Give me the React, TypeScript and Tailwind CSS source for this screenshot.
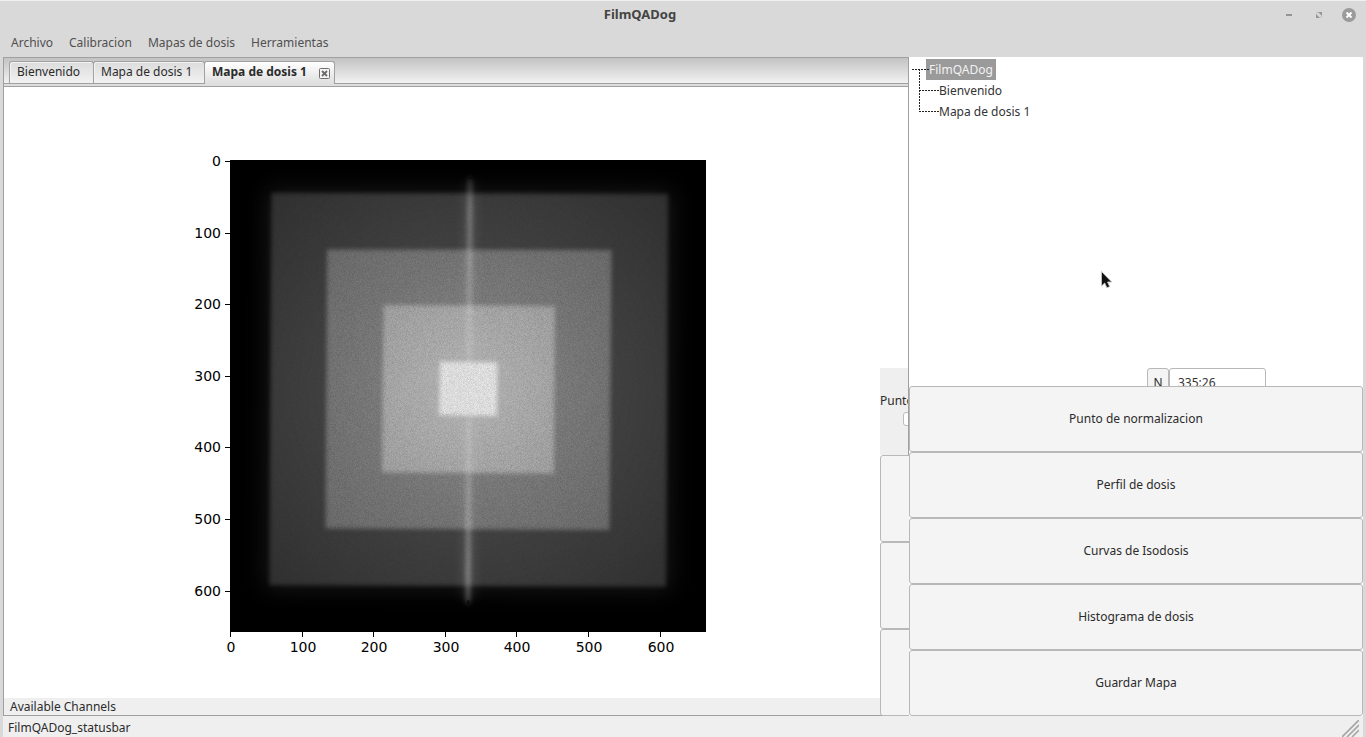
import React from "react";

const MENUS = ["Archivo", "Calibracion", "Mapas de dosis", "Herramientas"];
const ACTIONS = [
  "Punto de normalizacion",
  "Perfil de dosis",
  "Curvas de Isodosis",
  "Histograma de dosis",
  "Guardar Mapa",
];
const TICKS = [0, 100, 200, 300, 400, 500, 600];

function TitleBar() {
  return (
    <header className="flex h-[30px] shrink-0 items-center border-t border-[#f0f0f0] pr-2.5 pb-0.5">
      <h1 className="flex-1 pr-0.5 text-center text-[13px] font-bold text-[#444]">FilmQADog</h1>
      <div className="flex items-center justify-end gap-4">
        <button aria-label="Minimizar" className="flex size-3.5 items-center justify-center">
          <svg width="14" height="14" viewBox="0 0 14 14">
            <rect x="4" y="6" width="6" height="2" fill="#949494" />
          </svg>
        </button>
        <button aria-label="Restaurar" className="flex size-3.5 items-center justify-center">
          <svg width="14" height="14" viewBox="0 0 14 14">
            <path d="M6 4h4v4zM4 6v4h4z" fill="#949494" />
            <path d="M4.5 5.5 6 4M8.5 9.5 10 8" stroke="#b5b5b5" />
          </svg>
        </button>
        <button aria-label="Cerrar" className="flex size-3.5 items-center justify-center">
          <svg width="14" height="14" viewBox="0 0 14 14">
            <circle cx="7" cy="7" r="7" fill="#9a9a9a" />
            <path d="M4.5 4.5l5 5M9.5 4.5l-5 5" stroke="#fff" strokeWidth="2" />
          </svg>
        </button>
      </div>
    </header>
  );
}

function DoseMap() {
  return (
    <svg
      viewBox="4 87 904 611"
      className="block h-full w-full"
      role="img"
      aria-label="Mapa de dosis"
    >
      <defs>
        <clipPath id="axes">
          <rect x="230" y="160" width="476" height="472" />
        </clipPath>
        <filter id="soft" x="-20%" y="-20%" width="140%" height="140%" colorInterpolationFilters="sRGB">
          <feGaussianBlur stdDeviation="1.9" />
        </filter>
        <filter id="halo" x="-30%" y="-30%" width="160%" height="160%" colorInterpolationFilters="sRGB">
          <feGaussianBlur stdDeviation="11" />
        </filter>
        <filter
          id="beam"
          filterUnits="userSpaceOnUse"
          x="440"
          y="150"
          width="60"
          height="480"
          colorInterpolationFilters="sRGB"
        >
          <feGaussianBlur stdDeviation="2 3" />
        </filter>
        <filter
          id="glow"
          filterUnits="userSpaceOnUse"
          x="420"
          y="150"
          width="100"
          height="480"
          colorInterpolationFilters="sRGB"
        >
          <feGaussianBlur stdDeviation="5 5" />
        </filter>
        <filter id="grain" x="0" y="0" width="100%" height="100%" colorInterpolationFilters="sRGB">
          <feTurbulence type="fractalNoise" baseFrequency="1.37" numOctaves="1" seed="4" />
          <feColorMatrix values="1.6 0 0 0 -0.3  1.6 0 0 0 -0.3  1.6 0 0 0 -0.3  0 0 0 0 1" />
        </filter>
        <radialGradient id="g1" gradientUnits="userSpaceOnUse" cx="469" cy="390" r="280">
          <stop offset="0.5" stopColor="#404040" />
          <stop offset="1" stopColor="#2f2f2f" />
        </radialGradient>
        <radialGradient id="g2" gradientUnits="userSpaceOnUse" cx="469" cy="390" r="200">
          <stop offset="0.4" stopColor="#7a7a7a" />
          <stop offset="1" stopColor="#686868" />
        </radialGradient>
        <radialGradient id="g3" gradientUnits="userSpaceOnUse" cx="469" cy="390" r="120">
          <stop offset="0.2" stopColor="#aeaeae" />
          <stop offset="1" stopColor="#9c9c9c" />
        </radialGradient>
        <linearGradient id="gb" gradientUnits="userSpaceOnUse" x1="0" y1="174" x2="0" y2="604">
          <stop offset="0" stopColor="#fff" stopOpacity="0.1" />
          <stop offset="0.08" stopColor="#fff" stopOpacity="0.26" />
          <stop offset="0.3" stopColor="#fff" stopOpacity="0.18" />
          <stop offset="0.45" stopColor="#fff" stopOpacity="0.12" />
          <stop offset="0.6" stopColor="#fff" stopOpacity="0.14" />
          <stop offset="0.75" stopColor="#fff" stopOpacity="0.2" />
          <stop offset="0.93" stopColor="#fff" stopOpacity="0.3" />
          <stop offset="1" stopColor="#fff" stopOpacity="0.2" />
        </linearGradient>
      </defs>

      <g clipPath="url(#axes)">
        <rect x="230" y="160" width="476" height="472" fill="#000" />
        <polygon points="268,190 672,191 669,590 266,588" fill="#181818" filter="url(#halo)" />
        <polygon points="271.5,193 668,194 666,586.5 269.5,585" fill="url(#g1)" filter="url(#soft)" />
        <polygon points="327,249.5 611.5,250 609.5,530 325.5,528.5" fill="url(#g2)" filter="url(#soft)" />
        <polygon points="383.5,305 555,306 554,473.5 382,472.5" fill="url(#g3)" filter="url(#soft)" />
        <path d="M463 180h14L475 600h-14z" fill="url(#gb)" opacity="0.3" filter="url(#glow)" />
        <path d="M467.5 178h5L470.5 603h-5z" fill="url(#gb)" filter="url(#beam)" />
        <polygon points="440,361.5 497.5,362.5 497,416 439,415" fill="#dcdcdc" filter="url(#soft)" />
        <g style={{ mixBlendMode: "overlay" }}>
          <rect x="271" y="194" width="396" height="392" filter="url(#grain)" opacity="0.06" />
          <rect x="327" y="250" width="283" height="279" filter="url(#grain)" opacity="0.05" />
          <rect x="383" y="306" width="171" height="167" filter="url(#grain)" opacity="0.08" />
          <rect x="441" y="363" width="55" height="52" filter="url(#grain)" opacity="0.5" />
        </g>
        <path d="M469 178h5M467 602h3M468 600v4" stroke="#000" opacity="0.8" />
      </g>

      <g stroke="#000" strokeWidth="1" shapeRendering="crispEdges">
        {TICKS.map((t) => (
          <path
            key={t}
            d={`M225 ${161 + Math.round(t * 0.716)}.5h5M${230 + Math.round(t * 0.716)}.5 632v5`}
          />
        ))}
      </g>
      <g fontFamily="'DejaVu Sans', sans-serif" fontSize="14" fill="#000">
        {TICKS.map((t) => (
          <React.Fragment key={t}>
            <text x="221" y={166 + Math.round(t * 0.716)} textAnchor="end">
              {t}
            </text>
            <text x={231 + Math.round(t * 0.716)} y="652" textAnchor="middle">
              {t}
            </text>
          </React.Fragment>
        ))}
      </g>
    </svg>
  );
}

function Tabs() {
  const idle =
    "h-[22px] rounded-t-[3px] border border-b-0 border-[#a0a0a0] bg-linear-to-b from-[#dcdcdc] to-[#f2f2f2] px-[7px] pb-0.5 shadow-[inset_1px_1px_0_#f4f4f4]";
  return (
    <div className="shrink-0">
      <div
        role="tablist"
        className="flex h-[26px] items-end border-b border-[#a0a0a0] bg-linear-to-b from-[#c3c3c3] to-[#f2f2f2] pl-[5px]"
      >
        <button role="tab" className={`${idle} w-[85px] text-left`}>
          Bienvenido
        </button>
        <button role="tab" className={`${idle} -ml-px w-[112px] text-left`}>
          Mapa de dosis 1
        </button>
        <div className="-mb-px -ml-px flex h-[23px] w-[131px] items-center justify-between rounded-t-[3px] border border-b-0 border-[#a0a0a0] bg-linear-to-b from-white to-[#dedede] pr-1 pb-0.5 pl-[7px]">
          <button role="tab" aria-selected="true" className="font-bold">
            Mapa de dosis 1
          </button>
          <button aria-label="Cerrar pestaña" className="pt-0.5">
            <svg width="11" height="11" viewBox="0 0 11 11">
              <rect x="0.5" y="0.5" width="10" height="10" rx="1" fill="#f4f4f4" stroke="#6f6f6f" />
              <path d="M3 3l5 5M8 3l-5 5" stroke="#6a6a6a" strokeWidth="1.8" />
            </svg>
          </button>
        </div>
      </div>
      <div className="h-[3px] border-b border-[#a0a0a0] bg-[#dedede]" />
    </div>
  );
}

function ClippedPanel() {
  return (
    <div className="absolute -right-px -bottom-px flex h-[348px] w-[29px] flex-col overflow-hidden">
      <div className="h-[87px] shrink-0 overflow-hidden border-r border-[#a0a0a0] bg-[#efefef] pt-6">
        <label htmlFor="punto" className="block whitespace-nowrap leading-[18px]">
          Punto
        </label>
        <input
          id="punto"
          className="mt-0.5 ml-[23px] block h-3.5 w-20 rounded-[3px] border border-[#bcbcbc] bg-white"
        />
      </div>
      {["a", "b", "c"].map((k) => (
        <button
          key={k}
          aria-label="Panel"
          className="w-40 flex-1 rounded-[3px] border border-[#b8b8b8] bg-[#f4f4f4]"
        />
      ))}
    </div>
  );
}

function Tree() {
  return (
    <div className="relative pt-0.5 text-[#333]">
      <ul className="leading-[21px]">
        <li>
          <span className="ml-[17px] inline-block bg-[#9a9a9a] px-[3px] align-top text-[#f2f2f2]">FilmQADog</span>
          <ul className="pl-[30px]">
            <li>Bienvenido</li>
            <li>Mapa de dosis 1</li>
          </ul>
        </li>
      </ul>
      <svg
        className="pointer-events-none absolute top-0 left-0"
        width="32"
        height="60"
        viewBox="0 0 32 60"
        shapeRendering="crispEdges"
      >
        <path
          d="M3 12.5h17M10.5 12v43M10 33.5h20M10 54.5h20"
          stroke="#222"
          fill="none"
          strokeDasharray="2 1"
        />
      </svg>
    </div>
  );
}

export default function App() {
  return (
    <div className="flex h-screen flex-col overflow-hidden bg-[#d9d9d9] font-['Noto_Sans','Open_Sans',sans-serif] text-[12px] text-[#2b2b2b]">
      <TitleBar />
      <nav className="flex h-[27px] shrink-0 items-center gap-4 px-[11px] pb-0.5 text-[#505050]">
        {MENUS.map((m) => (
          <button key={m}>{m}</button>
        ))}
      </nav>

      <main className="mx-[3px] grid min-h-0 flex-1 grid-cols-[906fr_454fr] grid-rows-[minmax(0,1fr)]">
        <section className="relative flex min-w-0 flex-col border border-[#a0a0a0] bg-white">
          <Tabs />
          <div className="min-h-0 flex-1">
            <DoseMap />
          </div>
          <div className="h-[17px] shrink-0 bg-[#efefef] pl-1.5 leading-[18px]">Available Channels</div>
          <ClippedPanel />
        </section>

        <aside className="flex min-w-0 flex-col bg-white">
          <div className="relative min-h-0 flex-1 overflow-hidden">
            <Tree />
            <div className="absolute -bottom-3 left-[238px] flex h-[30px]">
              <button className="w-[22px] rounded-[3px] border border-[#b8b8b8] bg-[#f4f4f4]">N</button>
              <input
                aria-label="N"
                defaultValue="335:26"
                className="w-[97px] rounded-[3px] border border-[#b8b8b8] bg-white px-2 text-[#333]"
              />
            </div>
            <svg className="absolute top-[213px] left-[191px]" width="14" height="20" viewBox="0 0 14 20">
              <path
                d="M1.5 1.5v14.5l3.2-3 2.2 4.8 2.8-1.2-2.2-4.6h4.2z"
                fill="#111"
                stroke="#c4c4c4"
                strokeWidth="0.9"
              />
            </svg>
          </div>
          <div className="flex h-[330px] shrink-0 flex-col">
            {ACTIONS.map((a) => (
              <button key={a} className="flex-1 rounded-[3px] border border-[#b8b8b8] bg-[#f4f4f4]">
                {a}
              </button>
            ))}
          </div>
        </aside>
      </main>

      <footer className="mx-[3px] flex h-[21px] shrink-0 items-center justify-between bg-[#efefef] pr-1 pl-[5px]">
        <span className="pt-0.5">FilmQADog_statusbar</span>
        <svg width="17" height="17" viewBox="0 0 17 17" className="self-end">
          <path d="M0 17L17 0M5 17L17 5M10 17L17 10" stroke="#a6a6a6" strokeWidth="1.6" />
        </svg>
      </footer>
    </div>
  );
}
